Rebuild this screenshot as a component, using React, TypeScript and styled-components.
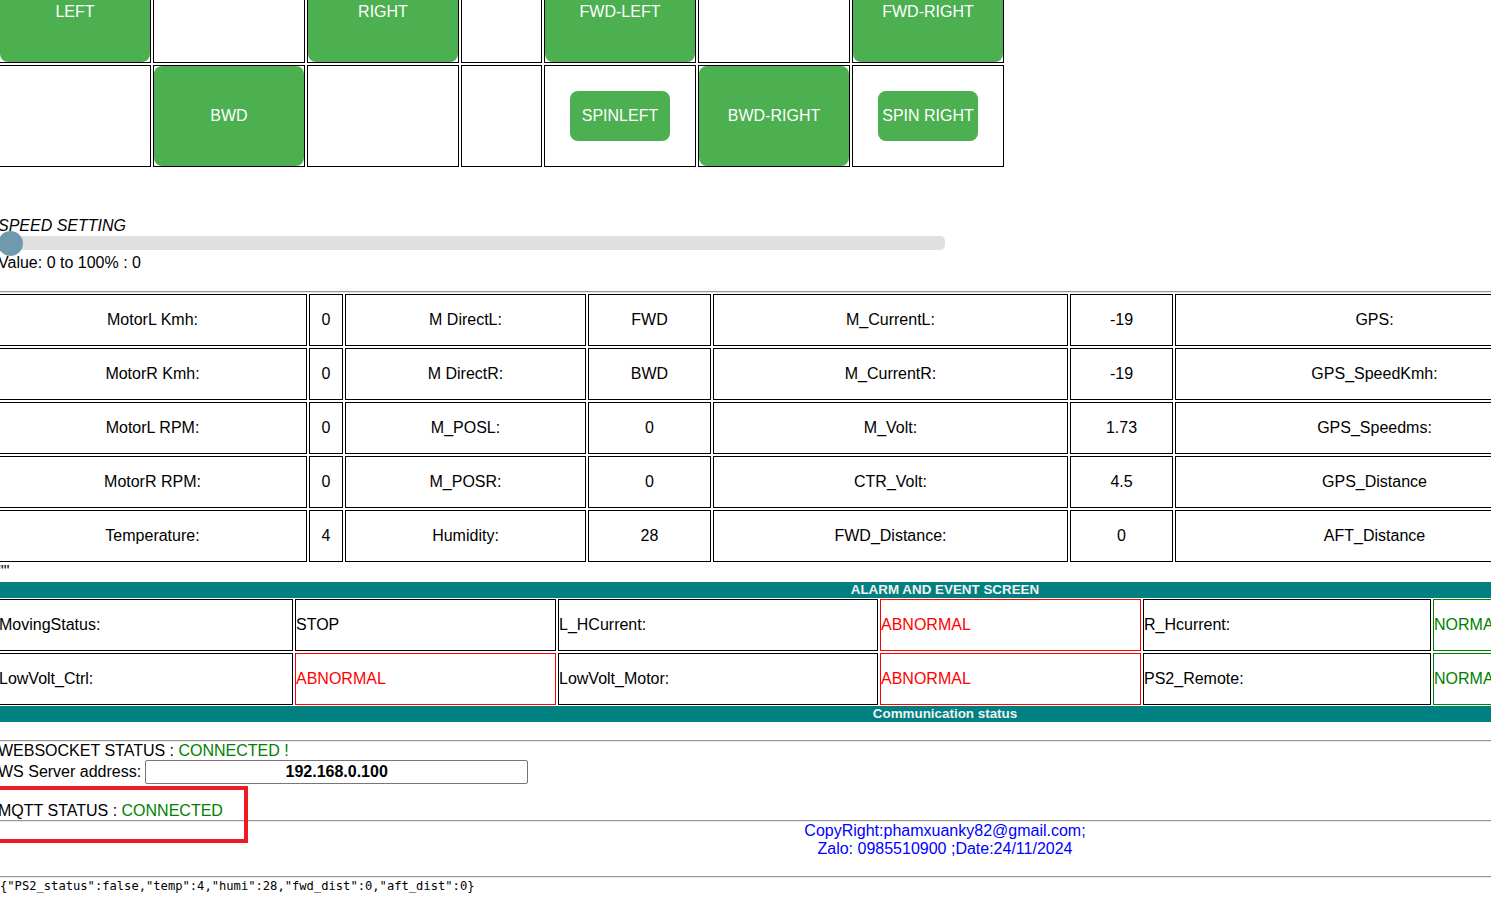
import React from "react";
import styled, { createGlobalStyle } from "styled-components";

const GlobalStyle = createGlobalStyle`
  html, body {
    margin: 0;
    padding: 0;
    overflow: hidden;
    background: #ffffff;
  }
  body {
    font-family: "Liberation Sans", Arial, sans-serif;
    font-size: 16px;
    color: #000;
  }
`;

const Page = styled.div`
  width: 1894px;
  margin: -39px 0 0 -2px;
  line-height: 18px;
`;

const ControlGrid = styled.div`
  display: grid;
  grid-template-columns: 152px 152px 152px 81px 152px 152px 152px;
  grid-auto-rows: 102px;
  gap: 2px;
  width: max-content;
  margin-left: 1px;
`;

const ControlCell = styled.div`
  box-sizing: border-box;
  border: 1px solid #000;
  display: flex;
  align-items: center;
  justify-content: center;
`;

const DriveButton = styled.button<{ $small?: boolean }>`
  box-sizing: border-box;
  width: ${(p) => (p.$small ? "100px" : "100%")};
  height: ${(p) => (p.$small ? "50px" : "100%")};
  background: #4caf50;
  color: #ffffff;
  border: none;
  border-radius: 8px;
  font-family: "Liberation Sans", Arial, sans-serif;
  font-size: 16px;
  padding: 0;
  white-space: nowrap;
`;

const SpeedSection = styled.div`
  margin-top: 50px;
`;

const SpeedTitle = styled.div`
  font-style: italic;
  height: 18px;
`;

const Slider = styled.input`
  -webkit-appearance: none;
  appearance: none;
  display: block;
  width: 947px;
  height: 14px;
  margin: 1px 0 4px 0;
  border-radius: 5px;
  background: #e0e0e0;
  outline: none;

  &::-webkit-slider-thumb {
    -webkit-appearance: none;
    appearance: none;
    width: 25px;
    height: 25px;
    border-radius: 50%;
    background: #6f9aae;
    border: none;
  }
`;

const ValueLine = styled.div`
  height: 18px;
`;

const Divider = styled.hr<{ $top: number }>`
  margin: ${(p) => p.$top}px 0 0 0;
  border: none;
  border-top: 1px solid #9a9a9a;
  border-bottom: 1px solid #e6e6e6;
  height: 0;
`;

const DataGrid = styled.div`
  display: grid;
  grid-template-columns: 309px 34px 241px 123px 355px 103px 399px;
  grid-auto-rows: 52px;
  gap: 2px;
  width: max-content;
  margin-top: 1px;
`;

const DataCell = styled.div`
  box-sizing: border-box;
  border: 1px solid #000;
  display: flex;
  align-items: center;
  justify-content: center;
  white-space: nowrap;
`;

const QuoteLine = styled.div`
  height: 20px;
  line-height: 20px;
`;

const SectionBar = styled.div`
  background: #008080;
  color: #f2f2f2;
  font-weight: bold;
  font-size: 13.4px;
  line-height: 16px;
  height: 16px;
  text-align: center;
  width: 1894px;
`;

const AlarmGrid = styled.div`
  display: grid;
  grid-template-columns: 295px 261px 320px 261px 288px 460px;
  grid-auto-rows: 52px;
  gap: 2px;
  margin: 1px 0;
  width: max-content;
`;

type Tone = "plain" | "bad" | "good";

const toneColor: Record<Tone, string> = {
  plain: "#000000",
  bad: "#ff0000",
  good: "#008000",
};

const AlarmCell = styled.div<{ $tone: Tone }>`
  box-sizing: border-box;
  border: 1px solid ${(p) => toneColor[p.$tone]};
  color: ${(p) => toneColor[p.$tone]};
  display: flex;
  align-items: center;
  padding: 0;
  white-space: nowrap;
  overflow: hidden;
`;

const CommSection = styled.div`
  padding-top: 18px;
`;

const StatusLine = styled.div`
  height: 18px;
  white-space: nowrap;
`;

const Ok = styled.span`
  color: #008000;
`;

const AddressRow = styled.div`
  display: flex;
  align-items: center;
  height: 24px;
  gap: 4px;
`;

const AddressInput = styled.input`
  box-sizing: border-box;
  width: 383px;
  height: 24px;
  border: 1px solid #767676;
  border-radius: 2px;
  text-align: center;
  font-family: "Liberation Sans", Arial, sans-serif;
  font-size: 16px;
  font-weight: bold;
  color: #000;
  padding: 0;
`;

const MqttBlock = styled.div`
  position: relative;
  margin-top: 18px;
`;

const Annotation = styled.div`
  position: absolute;
  box-sizing: border-box;
  top: -16px;
  left: -20px;
  width: 270px;
  height: 57px;
  border: 4px solid #ed1c24;
  pointer-events: none;
`;

const Footer = styled.div`
  text-align: center;
  color: #0000ff;
  padding-top: 0;
  width: 1894px;
`;

const JsonLine = styled.div`
  font-family: "DejaVu Sans Mono", "Liberation Mono", monospace;
  font-size: 12.13px;
  line-height: 14px;
  margin-top: 1px;
  padding-left: 2px;
  white-space: nowrap;
`;

type Ctl = { label?: string; small?: boolean };

const controls: Ctl[] = [
  { label: "LEFT" },
  {},
  { label: "RIGHT" },
  {},
  { label: "FWD-LEFT" },
  {},
  { label: "FWD-RIGHT" },
  {},
  { label: "BWD" },
  {},
  {},
  { label: "SPINLEFT", small: true },
  { label: "BWD-RIGHT" },
  { label: "SPIN RIGHT", small: true },
];

const dataRows: string[][] = [
  ["MotorL Kmh:", "0", "M DirectL:", "FWD", "M_CurrentL:", "-19", "GPS:"],
  ["MotorR Kmh:", "0", "M DirectR:", "BWD", "M_CurrentR:", "-19", "GPS_SpeedKmh:"],
  ["MotorL RPM:", "0", "M_POSL:", "0", "M_Volt:", "1.73", "GPS_Speedms:"],
  ["MotorR RPM:", "0", "M_POSR:", "0", "CTR_Volt:", "4.5", "GPS_Distance"],
  ["Temperature:", "4", "Humidity:", "28", "FWD_Distance:", "0", "AFT_Distance"],
];

const alarmRows: [string, Tone][][] = [
  [
    ["MovingStatus:", "plain"],
    ["STOP", "plain"],
    ["L_HCurrent:", "plain"],
    ["ABNORMAL", "bad"],
    ["R_Hcurrent:", "plain"],
    ["NORMAL", "good"],
  ],
  [
    ["LowVolt_Ctrl:", "plain"],
    ["ABNORMAL", "bad"],
    ["LowVolt_Motor:", "plain"],
    ["ABNORMAL", "bad"],
    ["PS2_Remote:", "plain"],
    ["NORMAL", "good"],
  ],
];

export default function App() {
  return (
    <>
      <GlobalStyle />
      <Page>
        <ControlGrid>
          {controls.map((c, i) => (
            <ControlCell key={i}>
              {c.label && <DriveButton $small={c.small}>{c.label}</DriveButton>}
            </ControlCell>
          ))}
        </ControlGrid>

        <SpeedSection>
          <SpeedTitle>SPEED SETTING</SpeedTitle>
          <Slider type="range" min={0} max={100} defaultValue={0} />
          <ValueLine>Value: 0 to 100% : 0</ValueLine>
        </SpeedSection>

        <Divider $top={19} />

        <DataGrid>
          {dataRows.flatMap((row, r) =>
            row.map((v, c) => <DataCell key={`${r}-${c}`}>{v}</DataCell>)
          )}
        </DataGrid>

        <QuoteLine>""</QuoteLine>

        <SectionBar>ALARM AND EVENT SCREEN</SectionBar>
        <AlarmGrid>
          {alarmRows.flatMap((row, r) =>
            row.map(([v, tone], c) => (
              <AlarmCell key={`${r}-${c}`} $tone={tone}>
                {v}
              </AlarmCell>
            ))
          )}
        </AlarmGrid>
        <SectionBar>Communication status</SectionBar>

        <CommSection>
          <Divider $top={0} />
          <StatusLine>
            WEBSOCKET STATUS : <Ok>CONNECTED !</Ok>
          </StatusLine>
          <AddressRow>
            <span>WS Server address:</span>
            <AddressInput readOnly value="192.168.0.100" />
          </AddressRow>
          <MqttBlock>
            <StatusLine>
              MQTT STATUS : <Ok>CONNECTED</Ok>
            </StatusLine>
            <Divider $top={0} />
            <Annotation />
          </MqttBlock>
          <Footer>
            CopyRight:phamxuanky82@gmail.com;
            <br />
            Zalo: 0985510900 ;Date:24/11/2024
          </Footer>
          <Divider $top={18} />
          <JsonLine>
            {'{"PS2_status":false,"temp":4,"humi":28,"fwd_dist":0,"aft_dist":0}'}
          </JsonLine>
        </CommSection>
      </Page>
    </>
  );
}
